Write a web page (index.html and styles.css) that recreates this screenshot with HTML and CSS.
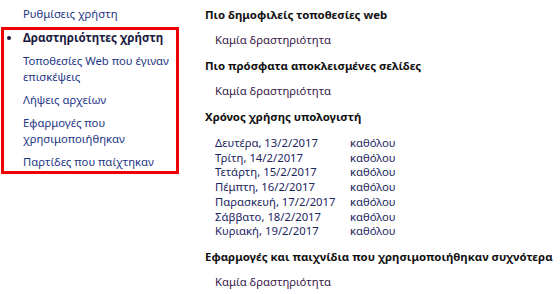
FILE: index.html
```html
<!DOCTYPE html>
<html lang="el">
<head>
  <meta charset="UTF-8" />
  <title>Δραστηριότητες χρήστη</title>
  <link rel="stylesheet" href="styles.css">
</head>
<body>

  <div class="page">
    <div class="sidebar">
      <a class="nav-link" href="#">Ρυθμίσεις χρήστη</a>
      <div class="nav-box">
        <div class="nav-item current">Δραστηριότητες χρήστη</div>
        <a class="nav-item" href="#">Τοποθεσίες Web που έγιναν επισκέψεις</a>
        <a class="nav-item" href="#">Λήψεις αρχείων</a>
        <a class="nav-item" href="#">Εφαρμογές που χρησιμοποιήθηκαν</a>
        <a class="nav-item" href="#">Παρτίδες που παίχτηκαν</a>
      </div>
    </div>

    <div class="content">
      <div class="section">
        <h2>Πιο δημοφιλείς τοποθεσίες web</h2>
        <div class="empty">Καμία δραστηριότητα</div>
      </div>

      <div class="section">
        <h2>Πιο πρόσφατα αποκλεισμένες σελίδες</h2>
        <div class="empty">Καμία δραστηριότητα</div>
      </div>

      <div class="section">
        <h2>Χρόνος χρήσης υπολογιστή</h2>
        <div class="usage">
          <span>Δευτέρα, 13/2/2017</span><span>καθόλου</span>
          <span>Τρίτη, 14/2/2017</span><span>καθόλου</span>
          <span>Τετάρτη, 15/2/2017</span><span>καθόλου</span>
          <span>Πέμπτη, 16/2/2017</span><span>καθόλου</span>
          <span>Παρασκευή, 17/2/2017</span><span>καθόλου</span>
          <span>Σάββατο, 18/2/2017</span><span>καθόλου</span>
          <span>Κυριακή, 19/2/2017</span><span>καθόλου</span>
        </div>
      </div>

      <div class="section">
        <h2>Εφαρμογές και παιχνίδια που χρησιμοποιήθηκαν συχνότερα</h2>
        <div class="empty">Καμία δραστηριότητα</div>
      </div>
    </div>
  </div>

</body>
</html>
```

FILE: styles.css
```css
body {
  margin: 0;
  font-family: 'Noto Sans', 'DejaVu Sans', sans-serif;
  font-size: 11.3px;
  background: white;
  color: #1c2660;
}
.page {
  display: flex;
}
.sidebar {
  width: 179px;
  padding-top: 6px;
  flex-shrink: 0;
}
.nav-link {
  display: block;
  padding-left: 23px;
  line-height: 16px;
  color: #1d3584;
  text-decoration: none;
}
.nav-box {
  margin: 5px 0 0 1px;
  border: 3px solid #f00000;
  padding: 0 1px 1px 19px;
  display: flex;
  flex-direction: column;
  gap: 7px;
}
.nav-item {
  line-height: 16px;
  color: #1d3584;
  text-decoration: none;
}
.nav-item.current {
  position: relative;
  font-size: 11.6px;
  font-weight: bold;
  color: #1a1a40;
}
.nav-item.current::before {
  content: '';
  position: absolute;
  left: -16px;
  top: 6px;
  width: 4px;
  height: 4px;
  border-radius: 50%;
  background: #1a1a40;
}
.content {
  padding: 6px 0 0 26px;
}
.section {
  margin-bottom: 9px;
}
h2 {
  margin: 0 0 8px;
  font-size: 11.4px;
  line-height: 18px;
  font-weight: bold;
  color: #111;
  white-space: nowrap;
}
.empty {
  padding-left: 10px;
  line-height: 16px;
  color: #36184a;
}
.usage {
  display: grid;
  grid-template-columns: 135px auto;
  padding: 2px 0 0 10px;
  line-height: 14.7px;
  color: #1c2660;
}
```
